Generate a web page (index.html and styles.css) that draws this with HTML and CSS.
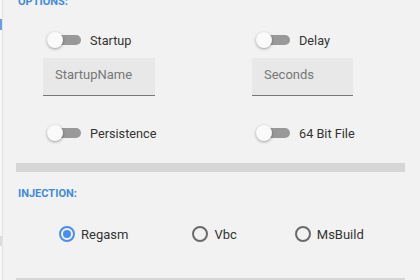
FILE: index.html
```html
<!DOCTYPE html>
<html lang="en">
<head>
  <meta charset="UTF-8" />
  <title>Options</title>
  <link rel="stylesheet" href="styles.css">
</head>
<body>
  <div class="frame">
    <div class="rail">
      <span class="rail-mark active"></span>
      <span class="rail-mark muted"></span>
    </div>

    <div class="panel">
      <div class="section-title cut">OPTIONS:</div>

      <div class="options">
        <div class="opt">
          <label class="switch"><span class="track"></span><span class="thumb"></span></label>
          <span class="opt-label">Startup</span>
        </div>
        <div class="opt">
          <label class="switch"><span class="track"></span><span class="thumb"></span></label>
          <span class="opt-label">Delay</span>
        </div>

        <div class="field wide"><input type="text" placeholder="StartupName"></div>
        <div class="field narrow"><input type="text" placeholder="Seconds"></div>

        <div class="opt lower">
          <label class="switch"><span class="track"></span><span class="thumb"></span></label>
          <span class="opt-label">Persistence</span>
        </div>
        <div class="opt lower">
          <label class="switch"><span class="track"></span><span class="thumb"></span></label>
          <span class="opt-label">64 Bit File</span>
        </div>
      </div>

      <div class="divider"></div>

      <div class="section-title">INJECTION:</div>

      <div class="radios">
        <label class="radio r1"><span class="dot checked"></span>Regasm</label>
        <label class="radio r2"><span class="dot"></span>Vbc</label>
        <label class="radio r3"><span class="dot"></span>MsBuild</label>
      </div>

      <div class="divider last"></div>
    </div>
  </div>
</body>
</html>
```

FILE: styles.css
```css
html, body {
  margin: 0;
  height: 100%;
  overflow: hidden;
}
body {
  background: #f2f2f2;
  font-family: Roboto, "Liberation Sans", sans-serif;
  color: #333;
}

.frame {
  display: flex;
  height: 280px;
}

/* left edge strip */
.rail {
  width: 2px;
  background: #f7f7f7;
  border-right: 1px solid #e2e2e2;
  display: flex;
  flex-direction: column;
}
.rail-mark { display: block; width: 2px; }
.rail-mark.active {
  margin-top: 19px;
  height: 11px;
  background: #6d9be8;
}
.rail-mark.muted {
  margin-top: 206px;
  height: 10px;
  background: #dcdcdc;
}

.panel {
  width: 389px;
  padding-left: 13px;
}

.section-title {
  font-size: 11px;
  font-weight: bold;
  color: #3f8be0;
  line-height: 14px;
  padding-left: 2px;
}
.section-title.cut { margin-top: -5px; }

.options {
  display: grid;
  grid-template-columns: 209px 1fr;
  padding-left: 27px;
  margin-top: 21px;
}

.opt {
  display: flex;
  align-items: center;
  height: 20px;
  padding-left: 4px;
}
.opt.lower { margin-top: 27px; }

.switch {
  position: relative;
  width: 34px;
  height: 16px;
  flex: none;
}
.track {
  position: absolute;
  left: 3px;
  top: 3px;
  width: 31px;
  height: 10px;
  border-radius: 5px;
  background: #999;
}
.thumb {
  position: absolute;
  left: 0;
  top: 0;
  width: 16px;
  height: 16px;
  border-radius: 50%;
  background: #fafafa;
  box-shadow: 0 1px 3px rgba(0,0,0,0.35);
}
.opt-label {
  margin-left: 9px;
  font-size: 12.7px;
}

.field { margin-top: 8px; }
.field input {
  display: block;
  box-sizing: border-box;
  height: 38px;
  border: 0;
  border-bottom: 1px solid #777;
  background: #e8e8e8;
  font-family: Roboto, "Liberation Sans", sans-serif;
  font-size: 13px;
  padding: 0 12px 4px;
  outline: none;
}
.field input::placeholder { color: #777; }
.field.wide input { width: 112px; }
.field.narrow input { width: 101px; }

.divider {
  height: 9px;
  background: #d6d6d6;
  margin-top: 20px;
}
.divider.last { margin-top: 34px; }
.panel > .section-title:not(.cut) {
  margin-top: 15px;
}

.radios {
  display: flex;
  align-items: center;
  margin-top: 23px;
  height: 20px;
  font-size: 13px;
}
.radio {
  display: flex;
  align-items: center;
}
.r1 { margin-left: 43px; }
.r2 { margin-left: 64px; }
.r3 { margin-left: 58px; }
.dot {
  box-sizing: border-box;
  width: 16px;
  height: 16px;
  border: 2px solid #6a6a6a;
  border-radius: 50%;
  margin-right: 6px;
  display: flex;
  align-items: center;
  justify-content: center;
}
.dot.checked { border-color: #4a8ff0; }
.dot.checked::after {
  content: "";
  width: 8px;
  height: 8px;
  border-radius: 50%;
  background: #4a8ff0;
}
```
